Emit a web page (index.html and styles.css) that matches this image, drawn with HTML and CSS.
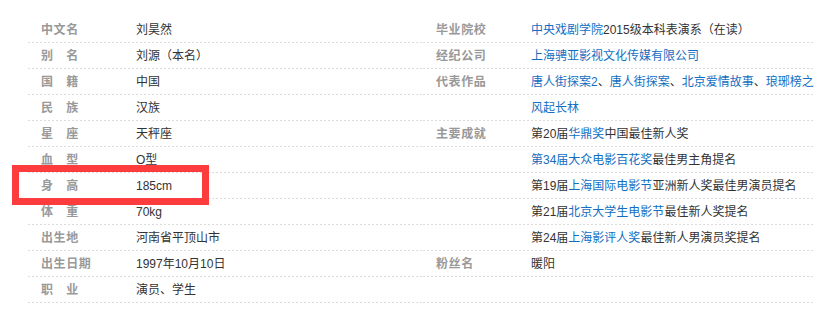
FILE: index.html
```html
<!DOCTYPE html>
<html lang="zh-CN">
<head>
<meta charset="utf-8">
<title>刘昊然</title>
<link rel="stylesheet" href="styles.css">
</head>
<body>
<div class="basic-info">
  <dl class="col col-left">
    <div class="item"><dt class="name">中文名</dt><dd class="value">刘昊然</dd></div>
    <div class="item"><dt class="name">别&emsp;名</dt><dd class="value">刘源（本名）</dd></div>
    <div class="item"><dt class="name">国&emsp;籍</dt><dd class="value">中国</dd></div>
    <div class="item"><dt class="name">民&emsp;族</dt><dd class="value">汉族</dd></div>
    <div class="item"><dt class="name">星&emsp;座</dt><dd class="value">天秤座</dd></div>
    <div class="item"><dt class="name">血&emsp;型</dt><dd class="value">O型</dd></div>
    <div class="item"><dt class="name">身&emsp;高</dt><dd class="value">185cm</dd></div>
    <div class="item"><dt class="name">体&emsp;重</dt><dd class="value">70kg</dd></div>
    <div class="item"><dt class="name">出生地</dt><dd class="value">河南省平顶山市</dd></div>
    <div class="item"><dt class="name">出生日期</dt><dd class="value">1997年10月10日</dd></div>
    <div class="item"><dt class="name">职&emsp;业</dt><dd class="value">演员、学生</dd></div>
  </dl>
  <dl class="col col-right">
    <div class="item"><dt class="name">毕业院校</dt><dd class="value"><a href="#">中央戏剧学院</a>2015级本科表演系（在读）</dd></div>
    <div class="item"><dt class="name">经纪公司</dt><dd class="value"><a href="#">上海骋亚影视文化传媒有限公司</a></dd></div>
    <div class="item"><dt class="name">代表作品</dt><dd class="value"><a href="#">唐人街探案2</a><span class="sep">、</span><a href="#">唐人街探案</a><span class="sep">、</span><a href="#">北京爱情故事</a><span class="sep">、</span><a href="#">琅琊榜之风起长林</a></dd></div>
    <div class="item"><dt class="name">主要成就</dt><dd class="value">
      <div>第20届<a href="#">华鼎奖</a>中国最佳新人奖</div>
      <div><a href="#">第34届大众电影百花奖</a>最佳男主角提名</div>
      <div>第19届<a href="#">上海国际电影节</a>亚洲新人奖最佳男演员提名</div>
      <div>第21届<a href="#">北京大学生电影节</a>最佳新人奖提名</div>
      <div>第24届<a href="#">上海影评人奖</a>最佳新人男演员奖提名</div>
    </dd></div>
    <div class="item"><dt class="name">粉丝名</dt><dd class="value">暖阳</dd></div>
  </dl>
  <div class="mark"></div>
</div>
</body>
</html>
```

FILE: styles.css
```css
html, body {
  margin: 0;
  padding: 0;
  background: #fff;
}

body {
  font-family: "Liberation Sans", "Noto Sans CJK SC", sans-serif;
  font-size: 12px;
  color: #333;
}

.basic-info {
  position: relative;
  display: flex;
  align-items: stretch;
  padding: 17px 0 0 28px;
}

.col {
  margin: 0;
  padding: 0;
  background-color: #fff;
  background-image:
    linear-gradient(to bottom, #fff 0, #fff 25px, transparent 25px),
    linear-gradient(to right, #dcdcdc 0, #dcdcdc 2px, #fff 2px);
  background-size: 4px 26px, 4px 26px;
  background-repeat: repeat;
  height: 286px;
}

.col-left {
  width: 395px;
}

.col-right {
  width: 392px;
}

.item {
  display: flex;
  line-height: 26px;
}

.name {
  width: 95px;
  padding-left: 13px;
  margin: 0;
  flex: none;
  font-weight: bold;
  color: #999;
  letter-spacing: 0.6px;
  white-space: nowrap;
}

.value {
  margin: 0;
  flex: 1;
  min-width: 0;
  color: #333;
}

.value a {
  color: #136ec2;
  text-decoration: none;
}

.sep {
  color: #333;
}

.mark {
  position: absolute;
  left: 12px;
  top: 165px;
  width: 183px;
  height: 26px;
  border: 7px solid #fd3d3d;
}
```
